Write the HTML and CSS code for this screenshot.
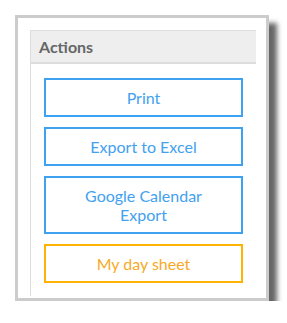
FILE: index.html
```html
<!DOCTYPE html>
<html lang="en">
<head>
    <meta charset="UTF-8">
    <meta name="viewport" content="width=device-width, initial-scale=1.0">
    <title>Actions</title>
    <link rel="stylesheet" href="styles.css">
</head>
<body>
    <div class="frame">
        <div class="panel">
            <div class="panel-header">Actions</div>
            <div class="panel-body">
                <a class="btn" href="#">Print</a>
                <a class="btn" href="#">Export to Excel</a>
                <a class="btn" href="#">Google Calendar<br>Export</a>
                <a class="btn btn-warning" href="#">My day sheet</a>
            </div>
        </div>
    </div>
</body>
</html>
```

FILE: styles.css
```css
body {
    margin: 0;
    padding: 0;
    background-color: #fff;
    font-family: Lato, "Open Sans", sans-serif;
}

.frame {
    margin: 15px 0 0 15px;
    width: 254px;
    height: 286px;
    border: 3px solid #ccc;
    background-color: #fff;
    box-shadow: 8px 8px 5px rgba(0, 0, 0, 0.6);
    padding: 12px 10px 2px 12px;
    box-sizing: border-box;
    display: flex;
}

.panel {
    flex: 1;
    border-left: 1px solid #ddd;
    display: flex;
    flex-direction: column;
}

.panel-header {
    background-color: #eee;
    border-top: 1px solid #ddd;
    border-bottom: 2px solid #ddd;
    height: 31px;
    line-height: 31px;
    padding-left: 8px;
    font-size: 16px;
    font-weight: bold;
    color: #666;
}

.panel-body {
    padding: 14px 13px 0 13px;
    display: flex;
    flex-direction: column;
    gap: 10px;
}

.btn {
    display: block;
    border: 2px solid #3ea2f3;
    padding: 8px 4px;
    line-height: 19px;
    font-size: 16px;
    color: #42a1f0;
    text-align: center;
    text-decoration: none;
}

.btn-warning {
    border-color: #ffb200;
    color: #f7aa28;
}
```
